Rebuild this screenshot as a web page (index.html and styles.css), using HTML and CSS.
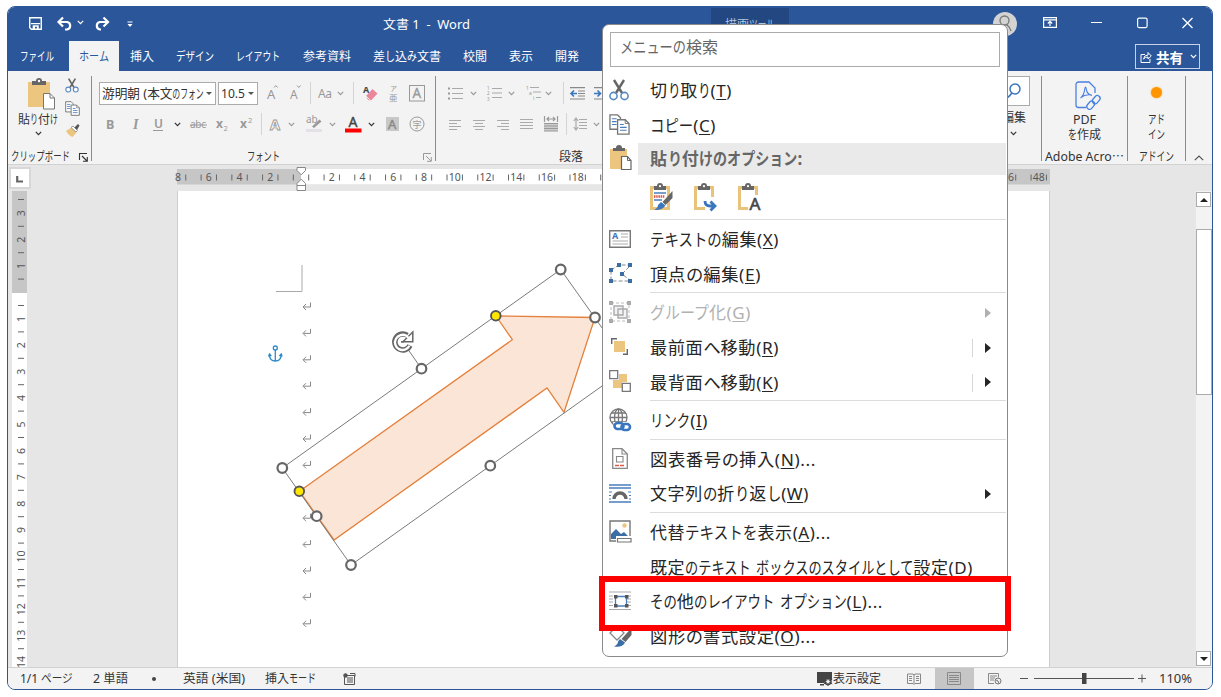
FILE: index.html
```html
<!DOCTYPE html>
<html lang="ja">
<head>
  <meta charset="UTF-8">
  <meta name="viewport" content="width=device-width, initial-scale=1.0">
  <title>文書 1 - Word</title>
  <link rel="stylesheet" href="styles.css">
</head>
<body>
  <svg class="defs">
    <symbol id="chev" viewBox="0 0 7 5"><path d="M.8 .8 3.5 3.6 6.2 .8" fill="none" stroke="currentColor" stroke-width="1.2"/></symbol>
    <symbol id="scissors" viewBox="0 0 20 22">
      <path d="M5 1 13 14M15 1 7 14" stroke="#666" stroke-width="2.4" fill="none"/>
      <g fill="#fff" stroke="#5b8ac0" stroke-width="1.6"><circle cx="4.500" cy="17" r="3.600"/><circle cx="15.500" cy="17" r="3.600"/></g>
    </symbol>
    <symbol id="copy" viewBox="0 0 22 22">
      <path d="M1 1h8l3 3v12H1z" fill="#fff" stroke="#777" stroke-width="1.4"/>
      <path d="M3 5h5M3 8h5M3 11h5" stroke="#4a7ebb" stroke-width="1.2"/>
      <path d="M9 6h8l4 4v11H9z" fill="#fff" stroke="#777" stroke-width="1.4"/>
      <path d="M17 6v4h4" fill="none" stroke="#777"/>
      <path d="M11.500 11h4M11.500 14h7M11.500 17h7" stroke="#4a7ebb" stroke-width="1.2"/>
    </symbol>
    <symbol id="clip" viewBox="0 0 24 28">
      <path d="M3.500 4.500h17v21h-17z" fill="#fff" stroke="#e9c27c" stroke-width="3"/>
      <path d="M6 3h3a3 3 0 0 1 6 0h3v4H6z" fill="#666"/><circle cx="12" cy="3.200" r="1.100" fill="#fff"/>
    </symbol>
  </svg>

  <div class="window">
    <header class="titlebar">
      <svg class="i-save" width="13" height="13" viewBox="0 0 14 14"><path d="M.8 .8h12.400v12.400H2.500L.8 11.500z" fill="none" stroke="#fff" stroke-width="1.500"/><path d="M2 7.200h10" stroke="#fff" stroke-width="1.300"/><path d="M4 9h6.500v4H8.500v-2.500h-2V13H4z" fill="#fff"/></svg>
      <svg class="i-undo" width="16" height="14" viewBox="0 0 16 14"><path d="M1.500 5H10a3.800 3.800 0 0 1 0 7.500H8M6 .5 1.500 5 6 9.500" fill="none" stroke="#fff" stroke-width="2.200"/></svg>
      <svg class="i-undochev" width="7" height="5"><use href="#chev"/></svg>
      <svg class="i-redo" width="16" height="14" viewBox="0 0 16 14"><path d="M14 5H6a3.800 3.800 0 0 0 0 7.500h1M9.500 .5 14 5 9.500 9.500" fill="none" stroke="#fff" stroke-width="2.200"/></svg>
      <svg class="i-custom" width="6" height="7" viewBox="0 0 6 7"><path d="M.5 1h5" stroke="#fff"/><path d="M.5 3h5L3 6z" fill="#fff"/></svg>
      <span class="doc-title fit" data-w="87">文書 1&nbsp; -&nbsp; Word</span>
      <div class="tool-tab"><span class="fit" data-w="50">描画ツール</span></div>
      <svg class="i-user" width="24" height="24" viewBox="0 0 24 24"><circle cx="12" cy="12" r="12" fill="#d3d3d3"/><circle cx="11.500" cy="8.500" r="4.500" fill="none" stroke="#777" stroke-width="1.300"/><path d="M9 12.500Q6 15 5 19M13 12q4 3 5 7" fill="none" stroke="#777" stroke-width="1.300"/></svg>
      <svg class="i-ribbon" width="14" height="11" viewBox="0 0 14 11"><path d="M.6 .6h12.800v9.800H.6zM.6 2.800h12.800M7 9V4.500M4.800 6.500 7 4.300l2.200 2.200" fill="none" stroke="#fff" stroke-width="1.200"/></svg>
      <svg class="i-min" width="11" height="11"><path d="M0 4.500h11" stroke="#fff" stroke-width="1.200"/></svg>
      <svg class="i-max" width="11" height="11"><rect x=".6" y=".1" width="9.500" height="9.500" rx="1.500" fill="none" stroke="#fff" stroke-width="1.200"/></svg>
      <svg class="i-close" width="11" height="11"><path d="M.5 0l10 10M10.500 0l-10 10" stroke="#fff" stroke-width="1.300"/></svg>
    </header>

    <nav class="tabs">
      <span class="tab"><span class="fit" data-w="34">ファイル</span></span>
      <span class="tab active"><span class="fit" data-w="30">ホーム</span></span>
      <span class="tab"><span class="fit" data-w="24">挿入</span></span>
      <span class="tab"><span class="fit" data-w="38">デザイン</span></span>
      <span class="tab"><span class="fit" data-w="44">レイアウト</span></span>
      <span class="tab"><span class="fit" data-w="48">参考資料</span></span>
      <span class="tab"><span class="fit" data-w="68">差し込み文書</span></span>
      <span class="tab"><span class="fit" data-w="24">校閲</span></span>
      <span class="tab"><span class="fit" data-w="24">表示</span></span>
      <span class="tab"><span class="fit" data-w="24">開発</span></span>
      <span class="tab"><span class="fit" data-w="30">ヘルプ</span></span>
      <button class="share">
        <svg width="12" height="12" viewBox="0 0 12 12"><path d="M5 3.500H1v8h9V8M3.500 8q.5-4 4.500-4V1.500L11.300 5 8 8V6Q5 6 3.500 8z" fill="none" stroke="#fff"/></svg>
        <span class="fit" data-w="27">共有</span>
        <svg width="7" height="5"><use href="#chev"/></svg>
      </button>
    </nav>

    <div class="ribbon">
      <section class="group clipboard">
        <div class="clip-body">
          <div class="paste">
            <svg width="28" height="31" viewBox="-1 0 28 31"><path d="M0 3h22v25H0z" fill="#ecc57f"/><path d="M4 2h4a3 3 0 0 1 6 0h4v4H4z" fill="#666"/><circle cx="11" cy="2" r="1.200" fill="#fff"/><path d="M15.500 14.500H22l4.500 4.500v11h-11z" fill="#fff" stroke="#777"/><path d="M22 14.500V19h4.500" fill="none" stroke="#777"/></svg>
            <span class="fit" data-w="40">貼り付け</span>
            <svg class="dark" width="7" height="5"><use href="#chev"/></svg>
          </div>
          <div class="clip-tools">
            <svg width="14" height="15"><use href="#scissors"/></svg>
            <svg width="15" height="15"><use href="#copy"/></svg>
            <svg width="15" height="13" viewBox="-1 0 15 13"><path d="M0 7 5.500 3.500l5 5-4 4.500Q3 12 0 7z" fill="#ecc57f"/><path d="M5 3.500 7 2l4.500 4.500L10 8z" fill="#fff" stroke="#777" stroke-width=".7"/><path d="M8.500 3.500 12 0l1.500 1.500L11 6z" fill="#555"/></svg>
          </div>
        </div>
        <footer><span class="fit" data-w="59">クリップボード</span>
          <svg class="launcher dark" width="9" height="9" viewBox="0 0 9 9"><path d="M.5 7V.5H8M3 3l5 5M8.300 4v4.300H4" fill="none" stroke="currentColor" stroke-width="1.100"/></svg></footer>
      </section>

      <section class="group font">
        <div class="row font-row1">
          <div class="combo"><span class="fit" data-w="102">游明朝 (本文のフォン</span><i class="drop"></i></div>
          <div class="combo size"><span class="fit" data-w="24">10.5</span><i class="drop"></i></div>
          <svg width="12" height="18"><text x="0" y="15" class="g" font-size="13">A</text><path d="M7 3.500 8.800 1.500 10.600 3.500" fill="none" stroke="#999"/></svg>
          <svg width="12" height="18"><text x="0" y="15" class="g" font-size="12">A</text><path d="M7 1.500 8.800 3.500 10.600 1.500" fill="none" stroke="#999"/></svg>
          <i class="vsep"></i>
          <svg width="16" height="16"><text x="0" y="12.500" class="g" font-size="12" textLength="14">Aa</text></svg>
          <svg class="dim" width="7" height="5"><use href="#chev"/></svg>
          <i class="vsep"></i>
          <svg width="15" height="16" viewBox="0 0 15 16"><text x="0" y="8" font-size="9" font-weight="700" fill="#444">A</text><path d="M3 11 9.500 4l5 4.500L8 15.500 5 15z" fill="#e8889a"/><path d="M3 11l4.500 4.500" stroke="#fff" stroke-width=".8"/></svg>
          <svg width="11" height="17"><text x="2" y="6" class="g" font-size="7">ア</text><text x="1" y="16" class="g" font-size="8.500">亜</text></svg>
          <svg width="17" height="17"><rect x=".5" y=".5" width="15" height="15.500" fill="none" stroke="#999"/><text x="3.500" y="13" class="g" font-size="13.500" stroke="#999" stroke-width=".3">A</text></svg>
        </div>
        <div class="row font-row2">
          <svg width="10" height="16"><text x="0" y="12.500" class="g" font-size="12.500" font-weight="700">B</text></svg>
          <svg width="10" height="16"><text x="2" y="12.500" class="g serif" font-size="14" font-weight="700" font-style="italic">I</text></svg>
          <svg width="11" height="16"><text x="1" y="11.500" class="g" font-size="12" font-weight="600">U</text><path d="M0 14.500h10" stroke="#999"/></svg>
          <svg class="dark" width="7" height="5"><use href="#chev"/></svg>
          <svg width="18" height="14"><text x="0" y="11" class="g" font-size="10" textLength="16">abc</text><path d="M0 8h17" stroke="#999"/></svg>
          <svg width="14" height="18"><text x="0" y="13" class="g" font-size="12" font-weight="700">x</text><text x="7.500" y="16" class="g" font-size="7.500">2</text></svg>
          <svg width="14" height="18"><text x="0" y="13" class="g" font-size="12" font-weight="700">x</text><text x="8" y="8" class="g" font-size="7.500">2</text></svg>
          <i class="vsep"></i>
          <svg width="14" height="16"><text x="1" y="13.500" font-size="14.500" fill="#fff" stroke="#999" stroke-width=".9" font-weight="700">A</text></svg>
          <svg class="dim" width="7" height="5"><use href="#chev"/></svg>
          <svg width="17" height="18"><text x="0" y="8" class="g" font-size="10">ab</text><path d="M6 11.500 13.500 4.500 15.500 6.500 8 13z" fill="#999"/><path d="M0 14h16v3H0z" fill="#e4e0e8"/></svg>
          <svg class="dim" width="7" height="5"><use href="#chev"/></svg>
          <svg width="17" height="18"><text x="3.500" y="11.500" font-size="14" fill="#444" stroke="#444" stroke-width=".4">A</text><path d="M0 13.500h16.500v4H0z" fill="#f00"/></svg>
          <svg class="dark" width="7" height="5"><use href="#chev"/></svg>
          <svg width="15" height="15"><path d="M1 0h13v14H1z" fill="#c8c8c8"/><text x="3" y="12" font-size="13" fill="#888" stroke="#888" stroke-width=".4">A</text></svg>
          <svg width="16" height="16"><circle cx="8" cy="8" r="7" fill="none" stroke="#999"/><text x="3.500" y="11.500" class="g" font-size="9">字</text></svg>
        </div>
        <footer><span class="fit" data-w="33">フォント</span>
          <svg class="launcher dim" width="9" height="9" viewBox="0 0 9 9"><path d="M.5 7V.5H8M3 3l5 5M8.300 4v4.300H4" fill="none" stroke="currentColor"/></svg></footer>
      </section>

      <section class="group paragraph">
        <div class="row para-row1">
          <svg width="17" height="15"><path d="M5 2.500h11M5 7.500h11M5 12.500h11" stroke="#aaa" stroke-width="1.200"/><path d="M1 1.500h2v2H1zM1 6.500h2v2H1zM1 11.500h2v2H1z" fill="#999"/></svg>
          <svg class="dim" width="7" height="5"><use href="#chev"/></svg>
          <svg width="17" height="16"><path d="M6 3.500h10M6 8h10M6 12.500h10" stroke="#aaa" stroke-width="1.200"/><text x="1" y="4.500" class="g" font-size="4.500">1</text><text x="1" y="10" class="g" font-size="4.500">2</text><text x="1" y="15.500" class="g" font-size="4.500">3</text></svg>
          <svg class="dim" width="7" height="5"><use href="#chev"/></svg>
          <svg width="17" height="16"><path d="M5 2.500h9M8 7h8M11 12.500h5" stroke="#aaa" stroke-width="1.200"/><text x="1" y="4.500" class="g" font-size="5">1</text><text x="4" y="9.500" class="g" font-size="5">a</text><text x="8" y="15" class="g" font-size="5">i</text></svg>
          <svg class="dim" width="7" height="5"><use href="#chev"/></svg>
          <i class="vsep"></i>
          <svg width="16" height="13"><path d="M0 .6h15M8 4h7M8 6.500h7M8 9h7M0 12h15" stroke="#888" stroke-width="1.100"/><path d="M7 6.500H1M4 3.500 1 6.500l3 3" fill="none" stroke="#3a76bd" stroke-width="1.600"/></svg>
          <svg width="16" height="13"><path d="M0 .6h15M8 4h7M8 6.500h7M8 9h7M0 12h15" stroke="#888" stroke-width="1.100"/><path d="M0 6.500h6M3.500 3.500 6.500 6.500l-3 3" fill="none" stroke="#3a76bd" stroke-width="1.600"/></svg>
        </div>
        <div class="row para-row2">
          <svg width="13" height="11"><path d="M0 1.500h12M0 4.500h8M0 7.500h12M0 10.500h8" stroke="#aaa"/></svg>
          <svg width="13" height="11"><path d="M0 1.500h12M2 4.500h8M0 7.500h12M2 10.500h8" stroke="#aaa"/></svg>
          <svg width="13" height="11"><path d="M0 1.500h12M4 4.500h8M0 7.500h12M4 10.500h8" stroke="#aaa"/></svg>
          <svg width="14" height="12"><path d="M0 1.500h13M0 4.500h13M0 7.500h13M0 10.500h13" stroke="#aaa"/></svg>
          <svg width="15" height="16"><path d="M.5 0v6M13.500 0v6M3 3h8M5 1 3 3l2 2M9 1l2 2-2 2" fill="none" stroke="#999" stroke-width="1.200"/><path d="M0 7h14v8H0z" fill="#ccc"/><path d="M0 7.500h14M0 10h14M0 12.500h14M0 15h14" stroke="#999"/></svg>
          <i class="vsep"></i>
          <svg width="15" height="15"><path d="M6 2.500h8M6 5.500h8M6 8.500h8M6 11.500h8M3 1v12M.8 4 3 1l2.200 3M.8 10 3 13l2.200-3" fill="none" stroke="#aaa" stroke-width="1.200"/></svg>
          <svg class="dim" width="7" height="5"><use href="#chev"/></svg>
        </div>
        <footer><span class="fit" data-w="24">段落</span></footer>
      </section>

      <div class="spacer"></div>

      <section class="group edit">
        <div class="find"><svg width="14" height="16" viewBox="0 0 14 16"><circle cx="8" cy="6" r="5" fill="none" stroke="#3a76bd" stroke-width="1.500"/><path d="M5 10 1 14.500" stroke="#3a76bd" stroke-width="1.800"/></svg></div>
        <span class="fit" data-w="24">編集</span>
        <svg class="dark" width="7" height="5"><use href="#chev"/></svg>
      </section>
      <section class="group adobe">
        <svg width="26" height="29" viewBox="0 0 26 29" fill="none" stroke="#4a80e0" stroke-width="1.300">
          <path d="M11 26.500H3.500a2.500 2.500 0 0 1-2.500-2.500V3.500A2.500 2.500 0 0 1 3.500 1H14l6 6v5"/>
          <path d="M10.500 6c-1.500 0 .5 7-5 11M10.500 6c1.500 0-1 7 6.500 8.500M6 16.500q4-3.500 10.500-2.500" stroke-width="1.100"/>
          <rect x="-4.500" y="-2.500" width="9" height="5.500" rx="2.700" transform="translate(15.500 24) rotate(-50)"/>
          <rect x="-4.500" y="-2.500" width="9" height="5.500" rx="2.700" transform="translate(21 18.500) rotate(-50)"/>
        </svg>
        <span class="fit" data-w="23">PDF</span>
        <span class="fit" data-w="33">を作成</span>
        <footer><span class="fit" data-w="79">Adobe Acro⋯</span></footer>
      </section>
      <section class="group addin">
        <i class="dot"></i>
        <span class="fit" data-w="17">アド</span>
        <span class="fit" data-w="17">イン</span>
        <footer><span class="fit" data-w="35">アドイン</span></footer>
      </section>
      <div class="collapse"><svg width="10" height="6"><path d="M.8 5.200 5 1l4.200 4.200" fill="none" stroke="#555" stroke-width="1.200"/></svg></div>
    </div>

    <div class="ruler-row">
      <div class="tab-type"><svg width="7" height="7"><path d="M1.200 0v5.500H7" fill="none" stroke="#666" stroke-width="2.200"/></svg></div>
      <svg class="hruler" id="hruler" viewBox="175 165 876 26" width="876" height="26">
        <path d="M177 169h873v15.500H177z" fill="#c6c6c6"/>
        <path d="M301 169h680v15.500H301z" fill="#fff"/>
        <g class="ticks"></g>
        <path d="M297 167.500h8.500v3l-4.200 4.300-4.300-4.300zM297 190.500v-7l4.300-4.300 4.200 4.300v7zM297 185.500h8.500" fill="#fff" stroke="#888"/>
      </svg>
    </div>

    <main class="main">
      <svg class="vruler" id="vruler" viewBox="12 191 15 476" width="15" height="476">
        <path d="M12 191h15v476H12z" fill="#fff"/><path d="M12 191h15v102H12z" fill="#c6c6c6"/>
        <g class="ticks"></g>
      </svg>
      <svg class="page" viewBox="178 191 871 476" width="873" height="476">
        <path d="M302 265v26.500h-26" fill="none" stroke="#aaa"/>
        <g id="marks" fill="none" stroke="#888"></g>
        <g fill="none" stroke="#2e8bc8" stroke-width="1.300"><circle cx="275.300" cy="348" r="2"/><path d="M275.300 350v11M269.500 354.500q0 6.500 5.800 6.500t5.800-6.500M268.500 356.500l1-2.500 1.800 2M282.200 356.500l-1-2.500-1.800 2"/></g>
        <path d="M299.500 491.300 512.300 339.700 496 316l99 1.500-31 94.800-17-24.300L334 540z" fill="#fbe5d6" stroke="#e5803c" stroke-width="1.300"/>
        <path d="M282.300 468 560.700 269.500 629.400 366.500 351 565zM421.500 368.700 407 348" fill="none" stroke="#7a7a7a"/>
        <g stroke-linejoin="miter">
          <path d="M410 345.500a8 8 0 1 1-2.800-10.300" fill="none" stroke="#666" stroke-width="5.500"/>
          <path d="M412.800 332v9.800h-9.800z" fill="#fff" stroke="#666" stroke-width="1.500"/>
          <path d="M409.400 345.800a7.600 7.600 0 1 1-3-10l2 2" fill="none" stroke="#fff" stroke-width="2.300"/>
          <path d="M401 341.800h3" stroke="#666" stroke-width="1.500"/>
        </g>
        <g fill="#fff" stroke="#666" stroke-width="2.200"><circle cx="282.300" cy="468" r="4.800"/><circle cx="560.700" cy="269.500" r="4.800"/><circle cx="351" cy="565" r="4.800"/><circle cx="421.500" cy="368.700" r="4.800"/><circle cx="595" cy="317.500" r="4.800"/><circle cx="490.300" cy="465.700" r="4.800"/><circle cx="316.700" cy="516.200" r="4.800"/></g>
        <g fill="#ffe600" stroke="#555" stroke-width="1.900"><circle cx="299.300" cy="491.300" r="4.800"/><circle cx="495.800" cy="315.800" r="4.800"/></g>
      </svg>
      <div class="scrollbar">
        <div class="sb-btn"><i class="up"></i></div>
        <div class="sb-thumb"></div>
        <div class="sb-btn bottom"><i class="down"></i></div>
      </div>
    </main>

    <footer class="status">
      <span class="fit s-page" data-w="53">1/1 ページ</span>
      <span class="fit s-words" data-w="35">2 単語</span>
      <i class="s-dot"></i>
      <span class="fit s-lang" data-w="62">英語 (米国)</span>
      <span class="fit s-mode" data-w="51">挿入モード</span>
      <svg class="s-macro" width="13" height="12" viewBox="0 0 13 12"><path d="M1.500 2.500h10v9h-10zM4 5h6M4 7h6M4 9h6" fill="none" stroke="#555"/><circle cx="2.500" cy="2.500" r="2.200" fill="#555"/><path d="M7 .5h5v3" stroke="#555" fill="none"/></svg>
      <span class="grow"></span>
      <svg width="16" height="14" viewBox="0 0 16 14"><path d="M0 0h15v7h-4l-4 4H0zM3 12h4v1.500H3z" fill="#444"/><circle cx="11" cy="9.500" r="3" fill="#f3f3f3" stroke="#444" stroke-width="1.500" /><path d="M11 5v9M6.800 7.200l8.400 4.600M6.800 11.800l8.400-4.600" stroke="#444"/><circle cx="11" cy="9.500" r="1.500" fill="#f3f3f3"/></svg>
      <span class="fit" data-w="48">表示設定</span>
      <svg class="s-read" width="14" height="12" viewBox="0 0 14 12"><path d="M.5 1h5.500l1 1 1-1h5.500v9.500H8l-1 1-1-1H.5zM7 2v9M2 3.500h3M2 5.500h3M2 7.500h3M9 3.500h3M9 5.500h3M9 7.500h3" fill="none" stroke="#888"/></svg>
      <span class="s-print"><svg width="15" height="13"><path d="M.5 .5h13v12H.5zM2 3.500h10M2 5.500h10M2 7.500h10M2 9.500h10" fill="none" stroke="#888"/></svg></span>
      <svg class="s-web" width="14" height="12" viewBox="0 0 14 12"><path d="M.5 .5h10v4M.5 .5v10H6M2 3h7M2 5h5M2 7h4" fill="none" stroke="#888"/><circle cx="10" cy="8" r="3" fill="#eee" stroke="#777"/><path d="M8 7l2 1 1 2.500" stroke="#777" fill="none"/></svg>
      <svg class="s-zoom" width="127" height="14"><path d="M0 6.500h8M118 6.500h8M122 2.500v8M14 6.500h100" stroke="#555"/><path d="M62 1h4.500v11H62z" fill="#444"/></svg>
      <span class="fit s-pct" data-w="33">110%</span>
    </footer>
  </div>

  <div class="menu">
    <div class="search"><span class="fit" data-w="98">メニューの検索</span></div>
    <div class="item"><svg width="20" height="22"><use href="#scissors"/></svg><span class="fit" data-w="82">切り取り(<u>T</u>)</span></div>
    <div class="item"><svg width="21" height="21"><use href="#copy"/></svg><span class="fit" data-w="66">コピー(<u>C</u>)</span></div>
    <div class="item head">
      <svg width="23" height="24" viewBox="-1 0 23 24"><path d="M0 3h17v20H0z" fill="#ecc57f"/><path d="M3 2h3a3 3 0 0 1 6 0h3v3H3z" fill="#666"/><path d="M11.500 10.500h6l3.500 4v9h-9.500z" fill="#fff" stroke="#666" stroke-width="1.200"/><path d="M17.500 10.500v4H21" fill="none" stroke="#666"/></svg>
      <div class="head-label"><span class="fit" data-w="153">貼り付けのオプション:</span></div>
    </div>
    <div class="paste-options">
      <svg width="26" height="28" viewBox="0 0 26 28"><use href="#clip" width="24" height="28"/><path d="M6 10h12M6 17h8" stroke="#4a7ebb" stroke-width="1.500"/><path d="M6 13.500h11" stroke="#d9534f" stroke-width="2.500" stroke-dasharray="1.500 .7"/><path d="M24.500 8v7l-7 7-3-3z" fill="#666"/><path d="M13 19l4.500 3.500Q14 27.500 6 27q4-2 4-5z" fill="#3a76bd"/></svg>
      <svg width="26" height="28" viewBox="0 0 26 28"><use href="#clip" width="24" height="28"/><path d="M13 14h10v14H13z" fill="#fff"/><path d="M13 18q0 5 5 5h4M18.500 18.500 23 23l-4.500 4.500" fill="none" stroke="#3a76bd" stroke-width="2.800"/></svg>
      <svg width="26" height="28" viewBox="0 0 26 28"><use href="#clip" width="24" height="28"/><path d="M12 12h12v16H12z" fill="#fff"/><text x="13.500" y="26.500" font-size="17" fill="#444" stroke="#444" stroke-width=".6">A</text></svg>
    </div>
    <hr>
    <div class="item"><svg width="22" height="18" viewBox="0 0 22 18"><path d="M.7 .7h20.600v16.600H.7z" fill="#fff" stroke="#777" stroke-width="1.400"/><text x="3" y="9" font-size="9" font-weight="700" fill="#3a76bd">A</text><path d="M12 4h7M12 7h7M3.500 11h15.500M3.500 14h15.500" stroke="#aaa"/></svg><span class="fit" data-w="129">テキストの編集(<u>X</u>)</span></div>
    <div class="item"><svg width="24" height="21" viewBox="0 0 24 21"><path d="M2 7 10 2h12l-9 9 9 7H2z" fill="none" stroke="#888" stroke-dasharray="4 2"/><path d="M0 5h4v4H0zM8 0h4v4H8zM19 0h4v4h-4zM11 9h4v4h-4zM0 16h4v4H0zM19 16h4v4h-4z" fill="#3a6ea5"/></svg><span class="fit" data-w="111">頂点の編集(<u>E</u>)</span></div>
    <hr>
    <div class="item disabled"><svg width="22" height="22" viewBox="0 0 22 22"><path d="M2 2h18v18H2z" fill="none" stroke="#bbb" stroke-dasharray="3 2"/><path d="M5 5h9v9H5zM9 8h9v9H9z" fill="#eee8f2" fill-opacity=".6" stroke="#aaa" stroke-width="1.400"/><path d="M0 0h4v4H0zM18 0h4v4h-4zM0 18h4v4H0zM18 18h4v4h-4z" fill="#aaa"/></svg><span class="fit" data-w="101">グループ化(<u>G</u>)</span><i class="sub"></i></div>
    <div class="item split"><svg width="22" height="22" viewBox="0 0 22 22"><path d="M2.700 8V2.700H8M14 18.300h4.300V13" fill="none" stroke="#666" stroke-width="1.400"/><path d="M5 5h11v11H5z" fill="#ecc57f"/></svg><span class="fit" data-w="129">最前面へ移動(<u>R</u>)</span><i class="sub"></i></div>
    <div class="item split"><svg width="22" height="22" viewBox="0 0 22 22"><path d="M10 4h8v8h-8zM4 10h9v8H4z" fill="#ecc57f"/><path d="M.7 .7h8v8h-8zM13.300 13.300h8v8h-8z" fill="#fff" stroke="#777" stroke-width="1.300"/></svg><span class="fit" data-w="129">最背面へ移動(<u>K</u>)</span><i class="sub"></i></div>
    <hr>
    <div class="item"><svg width="23" height="23" viewBox="0 0 23 23"><g fill="none" stroke="#777" stroke-width="1.300"><circle cx="9.500" cy="9.500" r="8.500"/><ellipse cx="9.500" cy="9.500" rx="4" ry="8.500"/><path d="M9.500 1v17M1 9.500h17M2.500 5h14M2.500 14h14"/></g><path d="M4 14h19v9H7z" fill="#fff"/><g fill="none" stroke="#3a76bd" stroke-width="2.600"><rect x="5.500" y="15" width="9" height="6" rx="3"/><rect x="12.500" y="16" width="8.500" height="6" rx="3"/></g></svg><span class="fit" data-w="58">リンク(<u>I</u>)</span></div>
    <hr>
    <div class="item"><svg width="22" height="21" viewBox="0 0 22 21"><path d="M3.700 .7H13L18.300 6v14.300H3.700z" fill="#fff" stroke="#888" stroke-width="1.300"/><path d="M13 1v5h5M7.500 8.500H14V14H7.500z" fill="none" stroke="#888" stroke-width="1.100"/><path d="M6 17.500h9" stroke="#e05a4a" stroke-width="1.300" stroke-dasharray="4 1"/></svg><span class="fit" data-w="166">図表番号の挿入(<u>N</u>)...</span></div>
    <div class="item"><svg width="22" height="19" viewBox="0 0 22 19"><path d="M0 1h22M0 4h22M0 18h22" stroke="#4a7ebb" stroke-width="1.400"/><path d="M0 8h3M19 8h3M0 11.500h2M20 11.500h2M0 15h2M20 15h2" stroke="#4a7ebb"/><path d="M5 15a6 6 0 0 1 12 0" fill="none" stroke="#666" stroke-width="3.400"/></svg><span class="fit" data-w="159">文字列の折り返し(<u>W</u>)</span><i class="sub"></i></div>
    <hr>
    <div class="item"><svg width="23" height="23" viewBox="0 0 23 23"><path d="M1 1h20v20H1z" fill="#fff" stroke="#777" stroke-width="1.400"/><path d="M2 19v-5l5-5 5 5 3-2 5 5v2z" fill="#3a6ea5"/><circle cx="15.500" cy="5.500" r="2.200" fill="#ecc57f"/><path d="M7 16h16v7H7z" fill="#fff"/><path d="M8.500 18.500h13.500v3.500H8.500z" fill="#fff" stroke="#777" stroke-width="1.200"/></svg><span class="fit" data-w="181">代替テキストを表示(<u>A</u>)...</span></div>
    <div class="item"><svg width="22" height="22"></svg><span class="fit" data-w="323">既定のテキスト ボックスのスタイルとして設定(<u>D</u>)</span></div>
    <div class="item"><svg width="22" height="20" viewBox="0 0 22 20"><path d="M0 1h22M0 5h4M18 5h4M0 8h4M18 8h4M0 11h4M18 11h4M0 14.500h4M18 14.500h4M0 18.500h22" stroke="#aaa" stroke-width="1.200"/><path d="M6.500 5.500h11v9.500h-11z" fill="#fff" stroke="#4a7ebb" stroke-width="1.300"/><path d="M5 4h3.500v3.500H5zM16 4h3.500v3.500H16zM5 13h3.500v3.500H5zM16 13h3.500v3.500H16z" fill="#555"/></svg><span class="fit" data-w="233">その他のレイアウト オプション(<u>L</u>)...</span></div>
    <div class="item"><svg width="24" height="24" viewBox="0 0 24 24"><path d="M1 9 8 2l7 7-7 7z" fill="#fff" stroke="#888" stroke-width="1.300"/><path d="M22.500 4v7l-6 7-4-3z" fill="#666"/><path d="M11 15l5 3.500Q13 24 5 22.500q4-2 4-5z" fill="#3a6ea5"/></svg><span class="fit" data-w="166">図形の書式設定(<u>O</u>)...</span></div>
  </div>
  <div class="highlight"></div>

  <script src="script.js"></script>
</body>
</html>
```
FILE: styles.css
```css
* {
  box-sizing: border-box;
}
body {
  margin: 0;
  padding: 6px 7px;
  background: #fff;
  font-family: "Noto Sans", "Noto Sans CJK JP", sans-serif;
  font-size: 12px;
  color: #333;
  width: 1221px;
  height: 697px;
  overflow: hidden;
  position: relative;
}
svg {
  display: block;
  flex: none;
  overflow: visible;
}
.defs {
  position: absolute;
  width: 0;
  height: 0;
}
.fit {
  display: inline-block;
  flex: none;
  white-space: nowrap;
  line-height: 1.2;
}
.fit > span {
  display: inline-block;
  transform-origin: 0 50%;
}
.kana,
.kana > span {
  display: inline-block;
  white-space: pre;
}
.kana > span {
  transform-origin: 0 50%;
}
.window .fit {
  transform: translateY(1px);
}
.g {
  fill: #999;
}
.serif {
  font-family: "Liberation Serif", serif;
}
.dark {
  color: #333;
}
.dim {
  color: #999;
}

/* window */
.window {
  width: 1206px;
  height: 684px;
  border: 1px solid #2b579a;
  border-radius: 8px;
  overflow: hidden;
  display: flex;
  flex-direction: column;
  background: #e6e6e6;
}
.titlebar {
  height: 34px;
  flex: none;
  background: #2b579a;
  color: #fff;
  display: flex;
  align-items: center;
}
.i-save {
  margin-left: 21px;
  margin-bottom: 2px;
}
.i-undo {
  margin-left: 15px;
  margin-bottom: 1px;
}
.i-undochev {
  margin-left: 4px;
  margin-bottom: 4px;
}
.i-redo {
  margin-left: 10px;
  margin-bottom: 1px;
}
.i-custom {
  margin-left: 17px;
}
.doc-title {
  margin-left: 250px;
}
.tool-tab {
  margin-left: 241px;
  width: 78px;
  height: 33px;
  align-self: flex-end;
  background: #224781;
  color: #b5c4dc;
  text-align: center;
  padding-top: 7px;
}
.i-user {
  margin-left: 204px;
  margin-bottom: 1px;
}
.i-ribbon {
  margin-left: 26px;
  margin-bottom: 3px;
}
.i-min {
  margin-left: 34px;
  margin-bottom: 2px;
}
.i-max {
  margin-left: 35px;
  margin-bottom: 2px;
}
.i-close {
  margin-left: 34px;
  margin-bottom: 2px;
}

/* tabs */
.tabs {
  height: 30px;
  flex: none;
  background: #2b579a;
  color: #fff;
  display: flex;
  padding-left: 2px;
}
.tab {
  padding: 0 11.1px;
  line-height: 30px;
}
.tab .fit {
  line-height: 30px;
}
.tab:first-child {
  padding-right: 15px;
  padding-left: 10px;
}
.tab.active {
  background: #f3f3f3;
  color: #2b579a;
  padding: 0 10px;
}
.share {
  margin-left: auto;
  margin-right: 12px;
  margin-top: 3px;
  width: 65px;
  height: 25px;
  border: 1px solid #c5d2e8;
  background: none;
  color: #fff;
  font: bold 14px "Noto Sans CJK JP", sans-serif;
  padding: 0 3px 0 4px;
  display: flex;
  align-items: center;
}
.share .fit {
  margin: 0 7px 0 4px;
}

/* ribbon */
.ribbon {
  height: 94px;
  flex: none;
  background: #f3f3f3;
  border-bottom: 1px solid #d2d2d2;
  display: flex;
}
.group {
  position: relative;
  height: 85px;
  margin-top: 5px;
  border-right: 1px solid #8c8c8c;
  flex: none;
}
.group footer {
  position: absolute;
  left: 0;
  right: 0;
  bottom: -3px;
  text-align: center;
  font-size: 12px;
}
.launcher {
  position: absolute;
  right: 3px;
  bottom: 2px;
}
.clipboard {
  width: 84px;
}
.clipboard footer {
  text-align: left;
  padding-left: 3px;
}
.clip-body {
  display: flex;
}
.paste {
  width: 40px;
  margin-left: 10px;
  padding-top: 3px;
  display: flex;
  flex-direction: column;
  align-items: center;
}
.paste svg:first-child {
  margin-left: 5px;
}
.paste .fit {
  margin: 2px 0 5px;
}
.clip-tools {
  display: flex;
  flex-direction: column;
  gap: 9px;
  margin-left: 7px;
  padding-top: 2px;
}
.clip-tools svg + svg {
  margin-top: -1px;
}
.row {
  display: grid;
  align-items: center;
  height: 24px;
}
.font {
  width: 344px;
}
.font-row1 {
  margin: 5px 0 0 7px;
  grid-template-columns: 119px 49px 23px 20px 8px 19px 16px 10px 25px 21px 17px;
}
.font-row2 {
  margin: 7px 0 0 14px;
  grid-template-columns: 25px 22px 21px 16px 26px 24px 21px 8px 19px 18px 23px 16px 23px 17px 24px 17px;
}
.combo {
  width: 117px;
  height: 23px;
  border: 1px solid #ababab;
  background: #fff;
  display: flex;
  align-items: center;
  font-size: 13px;
  padding-left: 2px;
}
.combo.size {
  width: 40px;
  padding-left: 2px;
}
.drop {
  border: 3px solid transparent;
  border-top: 3px solid #555;
  border-bottom: 0;
  margin-left: auto;
  margin-right: 3px;
}
.vsep {
  width: 1px;
  height: 22px;
  background: #d4d4d4;
}
.paragraph {
  width: 270px;
  border: 0;
}
.para-row1 {
  margin: 5px 0 0 11px;
  grid-template-columns: 23px 16px 22px 17px 20px 18px 7px 24px 20px;
}
.para-row2 {
  margin: 7px 0 0 13px;
  grid-template-columns: 24px 24px 23px 24px 22px 7px 20px 12px;
}
.spacer {
  flex: 1;
}
.edit {
  width: 56px;
  display: flex;
  flex-direction: column;
  align-items: center;
}
.find {
  width: 31px;
  height: 30px;
  border: 1px solid #ababab;
  background: #fff;
  display: flex;
  align-items: center;
  justify-content: center;
  margin: 0 0 4px 1px;
}
.edit .fit {
  margin-bottom: 7px;
}
.adobe {
  width: 86px;
  display: flex;
  flex-direction: column;
  align-items: center;
  padding-top: 5px;
}
.adobe > svg {
  margin: 0 0 2px 7px;
}
.adobe footer {
  padding-right: 3px;
}
.adobe .fit + .fit,
.addin .fit + .fit {
  margin-top: 1px;
}
.addin {
  width: 58px;
  display: flex;
  flex-direction: column;
  align-items: center;
  padding-top: 11px;
}
.dot {
  width: 11px;
  height: 11px;
  border-radius: 50%;
  background: #ff9500;
  box-shadow: 0 0 2px #ffb95c;
  margin-bottom: 14px;
}
.collapse {
  width: 26px;
  padding: 84px 0 0 8px;
}

/* rulers and document */
.ruler-row {
  height: 26px;
  flex: none;
  display: flex;
}
.tab-type {
  width: 22px;
  height: 22px;
  margin: 2px 0 0 1px;
  background: #fff;
  border: 2px solid #d8d8d8;
  display: flex;
  align-items: center;
  justify-content: center;
}
.tab-type svg {
  margin: 3px 2px 0 0;
}
.hruler {
  margin-left: 144px;
}
.ticks text {
  font-size: 10.5px;
  fill: #555;
  text-anchor: middle;
}
.ticks path {
  stroke: #666;
}
.main {
  height: 476px;
  flex: none;
  display: flex;
}
.vruler {
  margin-left: 4px;
  overflow: hidden;
}
.page {
  margin-left: 150px;
  background: #fff;
  border: solid #cdcdcd;
  border-width: 0 1px;
  overflow: hidden;
}
.scrollbar {
  width: 16px;
  margin-left: auto;
  background: #f3f3f3;
  display: flex;
  flex-direction: column;
}
.sb-btn {
  width: 15px;
  height: 15px;
  margin-top: 1px;
  border: 1px solid #ababab;
  background: #fff;
  display: flex;
  align-items: center;
  justify-content: center;
}
.sb-btn.bottom {
  margin-top: auto;
  margin-bottom: 1px;
}
.up,
.down {
  border: 4px solid transparent;
  border-bottom: 4px solid #222;
  border-top: 0;
}
.down {
  border-top: 4px solid #222;
  border-bottom: 0;
}
.sb-thumb {
  margin-top: 22px;
  width: 16px;
  height: 166px;
  background: #fff;
  border: 1px solid #ababab;
}

/* status bar */
.status {
  height: 22px;
  flex: none;
  background: #f3f3f3;
  border-top: 1px solid #d2d2d2;
  display: flex;
  align-items: center;
}
.s-page {
  margin-left: 12px;
}
.s-words {
  margin-left: 20px;
}
.s-dot {
  width: 4px;
  height: 4px;
  border-radius: 50%;
  background: #444;
  margin-left: 24px;
}
.s-lang {
  margin-left: 27px;
}
.s-mode {
  margin-left: 20px;
}
.s-macro {
  margin-left: 27px;
}
.grow {
  flex: 1;
}
.s-read {
  margin-left: 26px;
}
.s-print {
  margin-left: 14px;
  width: 39px;
  height: 21px;
  background: #c6c6c6;
  display: flex;
  align-items: center;
  justify-content: center;
}
.s-web {
  margin-left: 14px;
}
.s-zoom {
  margin-left: 18px;
}
.s-pct {
  margin-left: 12px;
  margin-right: 20px;
}

/* context menu */
.menu {
  position: absolute;
  left: 602px;
  top: 24px;
  width: 406px;
  height: 633px;
  background: #fff;
  border: 1px solid #8a8a8a;
  border-radius: 7px;
  padding-top: 7px;
  font-size: 17px;
  color: #262626;
}
.search {
  margin: 0 7px 7px;
  height: 35px;
  border: 1px solid #ababab;
  color: #666;
  font-size: 16px;
  display: flex;
  align-items: center;
  padding: 0 0 3px 9px;
}
.item {
  height: 34.6px;
  display: grid;
  grid-template-columns: 36px 1fr 17px 20px;
  align-items: center;
  padding-left: 6px;
}
.item > svg {
  justify-self: start;
  margin-bottom: 3px;
}
.item .fit {
  letter-spacing: .6px;
}
.item > .fit {
  margin-left: 5px;
}
.kana {
  letter-spacing: 0;
}
u {
  text-decoration-thickness: 1px;
  text-underline-offset: 2px;
}
.head {
  height: 32px;
  grid-template-columns: 29px 1fr;
  font-weight: bold;
  color: #666;
}
.head-label {
  background: #eaeaea;
  height: 32px;
  margin-right: 1px;
  padding-left: 12px;
  display: flex;
  align-items: center;
}
.paste-options {
  height: 44px;
  display: flex;
  align-items: center;
  gap: 18px;
  padding-left: 45px;
}
.menu hr {
  height: 1px;
  border: 0;
  background: #dcdcdc;
  margin: 0 1px 3px 47px;
}
.disabled {
  color: #b1b1b1;
}
.sub {
  grid-column: 4;
  border: 5px solid transparent;
  border-left: 6px solid currentColor;
  border-right: 0;
  width: 0;
  margin: 0 0 1px -2px;
}
.split {
  background: linear-gradient(#d6d6d6, #d6d6d6) 369px 50% / 1px 18px no-repeat;
}
.highlight {
  position: absolute;
  left: 599px;
  top: 576px;
  width: 412px;
  height: 55px;
  border: 6px solid #f00;
}
```
FILE: script.js
```javascript
const KANA = /([\u3041-\u30ff]+)/;

// UI kana are narrower than kanji: wrap every kana run
function wrapKana(root) {
  const runs = [];
  [...root.childNodes].forEach(function (node) {
    if (node.nodeType !== 3 || !KANA.test(node.data)) return;
    const parts = node.data.split(KANA).filter(Boolean).map(function (part) {
      if (!KANA.test(part)) return document.createTextNode(part);
      const box = document.createElement('span');
      const text = document.createElement('span');
      box.className = 'kana';
      text.textContent = part;
      box.append(text);
      runs.push(box);
      return box;
    });
    node.replaceWith(...parts);
  });
  return runs;
}

// squeeze each label to its UI width, kana first
document.querySelectorAll('.fit').forEach(function (el) {
  const w = Number(el.dataset.w);
  const inner = document.createElement('span');
  inner.append(...el.childNodes);
  el.append(inner);
  const runs = wrapKana(inner);
  const widths = runs.map(r => r.getBoundingClientRect().width);
  const kana = widths.reduce((a, b) => a + b, 0);
  const total = inner.getBoundingClientRect().width;
  if (kana) {
    const k = Math.min(1, Math.max(0.62, (w - total + kana) / kana));
    runs.forEach(function (r, i) {
      r.style.width = widths[i] * k + 'px';
      r.firstChild.style.transform = 'scaleX(' + k + ')';
    });
  }
  const natural = inner.getBoundingClientRect().width;
  el.style.width = w + 'px';
  inner.style.transform = 'scaleX(' + w / natural + ')';
});

// horizontal ruler: a number every 2 characters, ticks in between
let h = '';
for (let n = -8; n <= 48; n++) {
  const x = 301 + n * 15.37;
  if (n % 2 === 0 && n !== 0) {
    h += `<text x="${x}" y="181">${Math.abs(n)}</text>`;
  }
  h += `<path d="M${x + 7.7} 174.500v6"/>`;
}
document.querySelector('#hruler .ticks').innerHTML = h;

// vertical ruler
let v = '';
for (let n = -3; n <= 14; n++) {
  const y = 292.5 + n * 26.4;
  if (n !== 0) {
    v += `<text transform="translate(24.500 ${y}) rotate(-90)">${Math.abs(n)}</text>`;
  }
  v += `<path d="M18 ${y + 13}h6"/>`;
}
v += '<path d="M18 199.500h6"/>';
document.querySelector('#vruler .ticks').innerHTML = v;

// paragraph marks
let m = '';
for (let i = 0; i < 13; i++) {
  m += `<path d="M310.500 ${302.5 + i * 26.4}v4.500h-7M306 ${304 + i * 26.4}l-3 3 3 3"/>`;
}
document.getElementById('marks').innerHTML = m;
```
